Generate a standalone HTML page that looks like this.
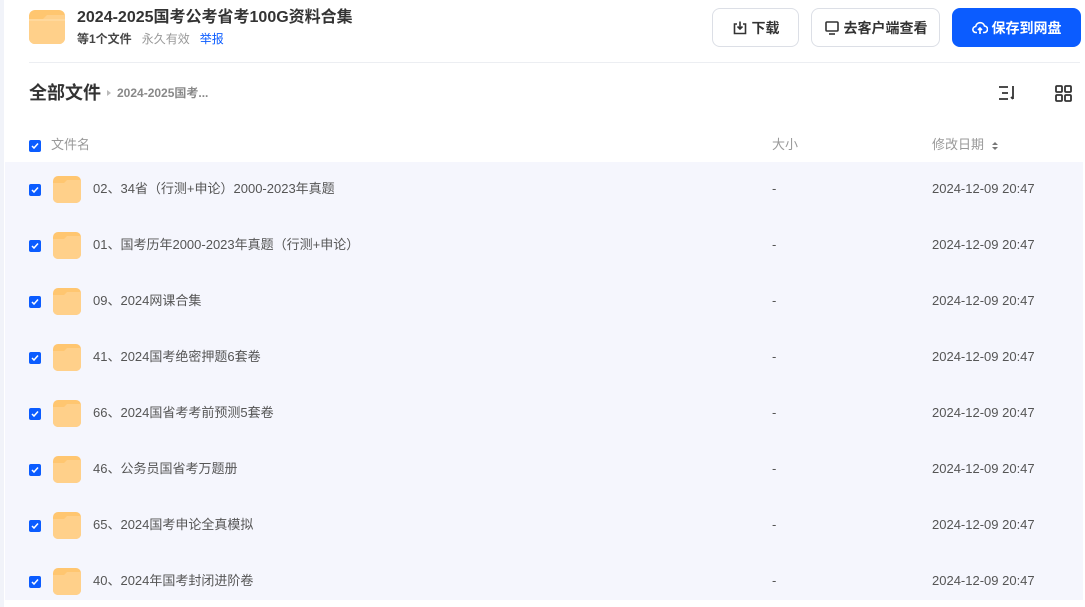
<!DOCTYPE html>
<html><head><meta charset="utf-8">
<style>
*{margin:0;padding:0;box-sizing:border-box}
body{width:1085px;height:607px;overflow:hidden;background:#fff;font-family:"Liberation Sans","Noto Sans CJK SC",sans-serif;position:relative;color:#333}
.lb{position:absolute;left:0;top:0;width:4px;height:607px;background:#f1f3f9}
.abs{position:absolute}
.folder{position:absolute}
.btn{position:absolute;top:8px;height:39px;border:1px solid #dcdfe6;border-radius:8px;background:#fff;font-size:14px;font-weight:bold;color:#333;display:flex;align-items:center;justify-content:center;gap:4px}
.cb{position:absolute;width:12px;height:12px;background:#0b5cff;border-radius:2px}
.cb svg{position:absolute;left:2px;top:2px}
.row{position:absolute;left:5px;width:1078px;height:56px;background:#f5f6fd}
.row .name,.row .size,.row .date{position:absolute;top:19px;font-size:13px;line-height:16px;color:#555}
.row .name{left:88px}
.row .size{left:767px}
.row .date{left:927px}
</style></head><body>
<div class="lb"></div>
<svg class="folder" style="left:29px;top:10px" width="36" height="34" viewBox="0 0 36 34"><rect x="0" y="0" width="36" height="34" rx="6" fill="#ffc670"/><path d="M0 9 H14 L18 5 H36 V28 a6 6 0 0 1-6 6 H6 a6 6 0 0 1-6-6Z" fill="#ffd08a"/><path d="M0 10 H36" stroke="#ffe0ad" stroke-width="1"/></svg>
<div class="abs" style="left:77px;top:8px;font-size:16px;line-height:20px;font-weight:bold;color:#333">2024-2025国考公考省考100G资料合集</div>
<div class="abs" style="left:77px;top:32px;font-size:12px;line-height:14px"><b style="color:#444">等1个文件</b><span style="color:#999;margin-left:10px">永久有效</span><span style="color:#0b5cff;margin-left:10px">举报</span></div>
<div class="btn" style="left:712px;width:87px"><svg width="16" height="16" viewBox="0 0 16 16" fill="none" stroke="#333" stroke-width="1.6"><path d="M5 4H2.5v9.5h11V4H11"/><path d="M8 1.5v7M5.5 6.5 8 9l2.5-2.5"/></svg>下载</div>
<div class="btn" style="left:811px;width:129px"><svg width="16" height="16" viewBox="0 0 16 16" fill="none" stroke="#333" stroke-width="1.6"><rect x="2" y="2" width="12" height="9" rx="1"/><path d="M5 14h6"/></svg>去客户端查看</div>
<div class="btn" style="left:952px;width:129px;background:#0b5cff;border-color:#0b5cff;color:#fff"><svg width="16" height="16" viewBox="0 0 16 16" fill="none" stroke="#fff" stroke-width="1.6"><path d="M5 12.5H4a3 3 0 0 1-.3-6A4.5 4.5 0 0 1 12.5 6a3 3 0 0 1-.5 6.5H11"/><path d="M8 14V8M6 10l2-2 2 2"/></svg>保存到网盘</div>
<div class="abs" style="left:29px;top:62px;width:1051px;height:1px;background:#eceef2"></div>
<div class="abs" style="left:29px;top:82px;font-size:18px;line-height:22px;font-weight:bold;color:#333">全部文件</div>
<div class="abs" style="left:107px;top:90px;width:0;height:0;border-left:4px solid #bbb;border-top:3.5px solid transparent;border-bottom:3.5px solid transparent"></div>
<div class="abs" style="left:117px;top:86px;font-size:12px;line-height:14px;font-weight:bold;color:#888">2024-2025国考...</div>
<svg class="abs" style="left:998px;top:85px" width="20" height="16" viewBox="0 0 20 16" fill="none" stroke="#333" stroke-width="1.8"><path d="M1 2h9M4 8h6M1 14h9M15 1v13M13 12l2 2"/></svg>
<svg class="abs" style="left:1055px;top:85px" width="17" height="17" viewBox="0 0 17 17" fill="none" stroke="#333" stroke-width="1.8"><rect x="1" y="1" width="6" height="6" rx="1"/><rect x="10" y="1" width="6" height="6" rx="1"/><rect x="1" y="10" width="6" height="6" rx="1"/><rect x="10" y="10" width="6" height="6" rx="1"/></svg>
<div class="cb" style="left:29px;top:140px"><svg width="8" height="8" viewBox="0 0 8 8"><path d="M1 4l2 2 4-4.5" stroke="#fff" stroke-width="1.5" fill="none"/></svg></div>
<div class="abs" style="left:51px;top:137px;font-size:13px;line-height:16px;color:#999">文件名</div>
<div class="abs" style="left:772px;top:137px;font-size:13px;line-height:16px;color:#999">大小</div>
<div class="abs" style="left:932px;top:137px;font-size:13px;line-height:16px;color:#999">修改日期</div>
<svg class="abs" style="left:991px;top:141px" width="8" height="10" viewBox="0 0 8 10"><path d="M1 4L4 1 7 4Z M1 6L4 9 7 6Z" fill="#777"/></svg>

<div class="row" style="top:162px"><div class="cb" style="left:24px;top:22px"><svg width="8" height="8" viewBox="0 0 8 8"><path d="M1 4l2 2 4-4.5" stroke="#fff" stroke-width="1.5" fill="none"/></svg></div><svg class="folder" style="left:48px;top:14px" width="28" height="27" viewBox="0 0 28 27"><rect width="28" height="27" rx="5" fill="#ffc670"/><path d="M0 7H11L14 4H28V22a5 5 0 0 1-5 5H5a5 5 0 0 1-5-5Z" fill="#ffd08a"/></svg><div class="name">02、34省（行测+申论）2000-2023年真题</div><div class="size">-</div><div class="date">2024-12-09 20:47</div></div>
<div class="row" style="top:218px"><div class="cb" style="left:24px;top:22px"><svg width="8" height="8" viewBox="0 0 8 8"><path d="M1 4l2 2 4-4.5" stroke="#fff" stroke-width="1.5" fill="none"/></svg></div><svg class="folder" style="left:48px;top:14px" width="28" height="27" viewBox="0 0 28 27"><rect width="28" height="27" rx="5" fill="#ffc670"/><path d="M0 7H11L14 4H28V22a5 5 0 0 1-5 5H5a5 5 0 0 1-5-5Z" fill="#ffd08a"/></svg><div class="name">01、国考历年2000-2023年真题（行测+申论）</div><div class="size">-</div><div class="date">2024-12-09 20:47</div></div>
<div class="row" style="top:274px"><div class="cb" style="left:24px;top:22px"><svg width="8" height="8" viewBox="0 0 8 8"><path d="M1 4l2 2 4-4.5" stroke="#fff" stroke-width="1.5" fill="none"/></svg></div><svg class="folder" style="left:48px;top:14px" width="28" height="27" viewBox="0 0 28 27"><rect width="28" height="27" rx="5" fill="#ffc670"/><path d="M0 7H11L14 4H28V22a5 5 0 0 1-5 5H5a5 5 0 0 1-5-5Z" fill="#ffd08a"/></svg><div class="name">09、2024网课合集</div><div class="size">-</div><div class="date">2024-12-09 20:47</div></div>
<div class="row" style="top:330px"><div class="cb" style="left:24px;top:22px"><svg width="8" height="8" viewBox="0 0 8 8"><path d="M1 4l2 2 4-4.5" stroke="#fff" stroke-width="1.5" fill="none"/></svg></div><svg class="folder" style="left:48px;top:14px" width="28" height="27" viewBox="0 0 28 27"><rect width="28" height="27" rx="5" fill="#ffc670"/><path d="M0 7H11L14 4H28V22a5 5 0 0 1-5 5H5a5 5 0 0 1-5-5Z" fill="#ffd08a"/></svg><div class="name">41、2024国考绝密押题6套卷</div><div class="size">-</div><div class="date">2024-12-09 20:47</div></div>
<div class="row" style="top:386px"><div class="cb" style="left:24px;top:22px"><svg width="8" height="8" viewBox="0 0 8 8"><path d="M1 4l2 2 4-4.5" stroke="#fff" stroke-width="1.5" fill="none"/></svg></div><svg class="folder" style="left:48px;top:14px" width="28" height="27" viewBox="0 0 28 27"><rect width="28" height="27" rx="5" fill="#ffc670"/><path d="M0 7H11L14 4H28V22a5 5 0 0 1-5 5H5a5 5 0 0 1-5-5Z" fill="#ffd08a"/></svg><div class="name">66、2024国省考考前预测5套卷</div><div class="size">-</div><div class="date">2024-12-09 20:47</div></div>
<div class="row" style="top:442px"><div class="cb" style="left:24px;top:22px"><svg width="8" height="8" viewBox="0 0 8 8"><path d="M1 4l2 2 4-4.5" stroke="#fff" stroke-width="1.5" fill="none"/></svg></div><svg class="folder" style="left:48px;top:14px" width="28" height="27" viewBox="0 0 28 27"><rect width="28" height="27" rx="5" fill="#ffc670"/><path d="M0 7H11L14 4H28V22a5 5 0 0 1-5 5H5a5 5 0 0 1-5-5Z" fill="#ffd08a"/></svg><div class="name">46、公务员国省考万题册</div><div class="size">-</div><div class="date">2024-12-09 20:47</div></div>
<div class="row" style="top:498px"><div class="cb" style="left:24px;top:22px"><svg width="8" height="8" viewBox="0 0 8 8"><path d="M1 4l2 2 4-4.5" stroke="#fff" stroke-width="1.5" fill="none"/></svg></div><svg class="folder" style="left:48px;top:14px" width="28" height="27" viewBox="0 0 28 27"><rect width="28" height="27" rx="5" fill="#ffc670"/><path d="M0 7H11L14 4H28V22a5 5 0 0 1-5 5H5a5 5 0 0 1-5-5Z" fill="#ffd08a"/></svg><div class="name">65、2024国考申论全真模拟</div><div class="size">-</div><div class="date">2024-12-09 20:47</div></div>
<div class="row" style="top:554px;height:46px"><div class="cb" style="left:24px;top:22px"><svg width="8" height="8" viewBox="0 0 8 8"><path d="M1 4l2 2 4-4.5" stroke="#fff" stroke-width="1.5" fill="none"/></svg></div><svg class="folder" style="left:48px;top:14px" width="28" height="27" viewBox="0 0 28 27"><rect width="28" height="27" rx="5" fill="#ffc670"/><path d="M0 7H11L14 4H28V22a5 5 0 0 1-5 5H5a5 5 0 0 1-5-5Z" fill="#ffd08a"/></svg><div class="name">40、2024年国考封闭进阶卷</div><div class="size">-</div><div class="date">2024-12-09 20:47</div></div>
</body></html>
